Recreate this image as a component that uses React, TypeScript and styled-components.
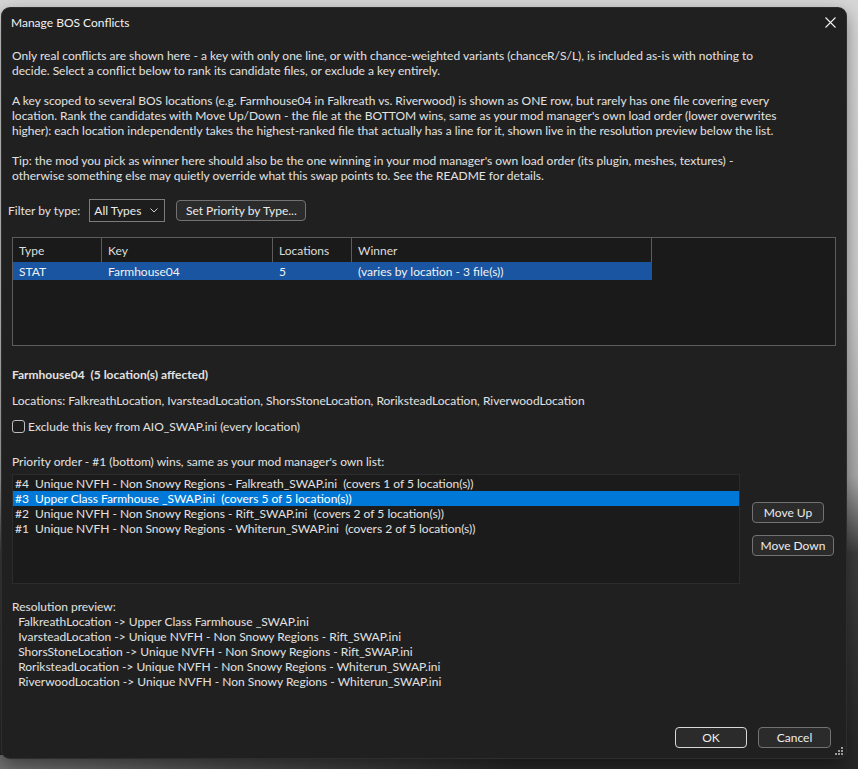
import React from "react";
import styled, { createGlobalStyle } from "styled-components";

const FONT = `"Lato", "Segoe UI", "Liberation Sans", sans-serif`;

const GlobalStyle = createGlobalStyle`
  html, body { margin: 0; padding: 0; }
  body {
    width: 858px;
    height: 769px;
    overflow: hidden;
    font-family: ${FONT};
    background: #1e1e1e;
  }
  * { box-sizing: border-box; }
`;

const Desktop = styled.div`
  width: 858px;
  height: 769px;
  padding: 8px 0 0 2px;
  background:
    linear-gradient(90deg, rgba(120,120,120,0.9) 0%, rgba(90,90,90,0.6) 30%, rgba(30,30,30,0) 60%) bottom / 100% 14px no-repeat,
    linear-gradient(180deg, #d6d6d6 0%, #cbcbcb 40%, #a9a9a9 62%, #3c3c3c 72%, #262626 100%);
`;

const Dialog = styled.div`
  width: 844px;
  height: 750px;
  background: #202020;
  border-radius: 8px;
  box-shadow: 0 0 0 1px #2e2e2e, 0 6px 18px rgba(0, 0, 0, 0.45);
  display: flex;
  flex-direction: column;
  color: #e2e2e2;
  font-size: 12px;
  line-height: 15px;
  position: relative;
`;

const TitleBar = styled.div`
  height: 28px;
  display: flex;
  align-items: center;
  justify-content: space-between;
  padding: 0 10px 0 9px;
`;

const Title = styled.div`
  color: #f2f2f2;
  font-size: 12px;
`;

const CloseButton = styled.div`
  width: 12px;
  height: 12px;
  display: flex;
  align-items: center;
  justify-content: center;
`;

const Content = styled.div`
  flex: 1;
  display: flex;
  flex-direction: column;
  padding: 12px 10px 0 10px;
`;

const Paragraph = styled.p<{ $gap?: number }>`
  margin: ${(p) => p.$gap ?? 0}px 0 0 0;
  white-space: pre-line;
`;

const FilterRow = styled.div`
  display: flex;
  align-items: center;
  height: 23px;
  margin: 16px 0 0 -4px;
`;

const FilterLabel = styled.span`
  margin-right: 9px;
`;

const Combo = styled.div`
  width: 76px;
  height: 23px;
  border: 1px solid #7c7c7c;
  background: #1d1d1d;
  display: flex;
  align-items: center;
  justify-content: space-between;
  padding: 0 6px 0 4px;
  color: #ececec;
`;

const Button = styled.div<{ $w: number; $default?: boolean }>`
  width: ${(p) => p.$w}px;
  height: 21px;
  border: 1px solid ${(p) => (p.$default ? "#d8d8d8" : "#727272")};
  border-radius: 4px;
  background: #2b2b2b;
  color: #ececec;
  display: flex;
  align-items: center;
  justify-content: center;
`;

const SetPriorityButton = styled(Button)`
  margin-left: 11px;
`;

const Table = styled.div`
  margin-top: 15px;
  height: 109px;
  border: 1px solid #5c5c5c;
  background: #1a1a1a;
`;

const Row = styled.div<{ $selected?: boolean; $header?: boolean }>`
  display: grid;
  grid-template-columns: 89px 171px 79px 300px;
  width: 639px;
  height: ${(p) => (p.$header ? 24 : 18)}px;
  background: ${(p) => (p.$selected ? "#1955a1" : "transparent")};
  color: ${(p) => (p.$header ? "#dedede" : "#f2f2f2")};
`;

const Cell = styled.div<{ $sep?: boolean }>`
  display: flex;
  align-items: center;
  padding-left: 6px;
  border-right: ${(p) => (p.$sep ? "1px solid #5c5c5c" : "none")};
  white-space: nowrap;
  overflow: hidden;
`;

const Heading = styled.div`
  margin-top: 21px;
  font-weight: 700;
  white-space: pre;
`;

const Line = styled.div<{ $gap?: number }>`
  margin-top: ${(p) => p.$gap ?? 0}px;
  white-space: pre;
`;

const CheckRow = styled.label`
  margin-top: 11px;
  display: flex;
  align-items: center;
  gap: 3px;
  height: 15px;
`;

const CheckBox = styled.span`
  width: 13px;
  height: 13px;
  border: 1px solid #bdbdbd;
  border-radius: 3px;
  background: #1c1c1c;
`;

const PriorityArea = styled.div`
  margin-top: 5px;
  display: flex;
  align-items: flex-start;
`;

const ListBox = styled.div`
  width: 728px;
  height: 110px;
  border: 1px solid #2c2c2c;
  background: #1b1b1b;
  padding-top: 1px;
`;

const ListItem = styled.div<{ $selected?: boolean }>`
  height: 15px;
  line-height: 15px;
  padding-left: 2px;
  white-space: pre;
  background: ${(p) => (p.$selected ? "#0078d7" : "transparent")};
  color: ${(p) => (p.$selected ? "#ffffff" : "#e2e2e2")};
`;

const SideButtons = styled.div`
  margin: 28px 0 0 12px;
  display: flex;
  flex-direction: column;
  gap: 12px;
`;

const Preview = styled.div`
  margin-top: 15px;
  white-space: pre;
`;

const Footer = styled.div`
  margin-top: auto;
  display: flex;
  justify-content: flex-end;
  gap: 11px;
  padding: 0 15px 10px 0;
`;

const Grip = styled.svg`
  position: absolute;
  right: 3px;
  bottom: 3px;
`;

const candidates = [
  "#4  Unique NVFH - Non Snowy Regions - Falkreath_SWAP.ini  (covers 1 of 5 location(s))",
  "#3  Upper Class Farmhouse _SWAP.ini  (covers 5 of 5 location(s))",
  "#2  Unique NVFH - Non Snowy Regions - Rift_SWAP.ini  (covers 2 of 5 location(s))",
  "#1  Unique NVFH - Non Snowy Regions - Whiterun_SWAP.ini  (covers 2 of 5 location(s))",
];

const preview = [
  "FalkreathLocation -> Upper Class Farmhouse _SWAP.ini",
  "IvarsteadLocation -> Unique NVFH - Non Snowy Regions - Rift_SWAP.ini",
  "ShorsStoneLocation -> Unique NVFH - Non Snowy Regions - Rift_SWAP.ini",
  "RoriksteadLocation -> Unique NVFH - Non Snowy Regions - Whiterun_SWAP.ini",
  "RiverwoodLocation -> Unique NVFH - Non Snowy Regions - Whiterun_SWAP.ini",
];

export default function App() {
  return (
    <Desktop>
      <GlobalStyle />
      <Dialog>
        <TitleBar>
          <Title>Manage BOS Conflicts</Title>
          <CloseButton>
            <svg width="11" height="11" viewBox="0 0 11 11">
              <path d="M0.5 0.5 L10.5 10.5 M10.5 0.5 L0.5 10.5" stroke="#f0f0f0" strokeWidth="1.1" />
            </svg>
          </CloseButton>
        </TitleBar>
        <Content>
          <Paragraph>
            {"Only real conflicts are shown here - a key with only one line, or with chance-weighted variants (chanceR/S/L), is included as-is with nothing to\ndecide. Select a conflict below to rank its candidate files, or exclude a key entirely."}
          </Paragraph>
          <Paragraph $gap={15}>
            {"A key scoped to several BOS locations (e.g. Farmhouse04 in Falkreath vs. Riverwood) is shown as ONE row, but rarely has one file covering every\nlocation. Rank the candidates with Move Up/Down - the file at the BOTTOM wins, same as your mod manager's own load order (lower overwrites\nhigher): each location independently takes the highest-ranked file that actually has a line for it, shown live in the resolution preview below the list."}
          </Paragraph>
          <Paragraph $gap={15}>
            {"Tip: the mod you pick as winner here should also be the one winning in your mod manager's own load order (its plugin, meshes, textures) -\notherwise something else may quietly override what this swap points to. See the README for details."}
          </Paragraph>

          <FilterRow>
            <FilterLabel>Filter by type:</FilterLabel>
            <Combo>
              <span>All Types</span>
              <svg width="8" height="5" viewBox="0 0 8 5">
                <path d="M0.5 0.5 L4 4 L7.5 0.5" stroke="#cfcfcf" strokeWidth="1" fill="none" />
              </svg>
            </Combo>
            <SetPriorityButton $w={130}>Set Priority by Type...</SetPriorityButton>
          </FilterRow>

          <Table>
            <Row $header>
              <Cell $sep>Type</Cell>
              <Cell $sep>Key</Cell>
              <Cell $sep>Locations</Cell>
              <Cell $sep>Winner</Cell>
            </Row>
            <Row $selected>
              <Cell>STAT</Cell>
              <Cell>Farmhouse04</Cell>
              <Cell>5</Cell>
              <Cell>(varies by location - 3 file(s))</Cell>
            </Row>
          </Table>

          <Heading>{"Farmhouse04  (5 location(s) affected)"}</Heading>
          <Line $gap={11}>
            Locations: FalkreathLocation, IvarsteadLocation, ShorsStoneLocation, RoriksteadLocation, RiverwoodLocation
          </Line>
          <CheckRow>
            <CheckBox />
            <span>Exclude this key from AIO_SWAP.ini (every location)</span>
          </CheckRow>
          <Line $gap={20}>Priority order - #1 (bottom) wins, same as your mod manager's own list:</Line>

          <PriorityArea>
            <ListBox>
              {candidates.map((c, i) => (
                <ListItem key={c} $selected={i === 1}>
                  {c}
                </ListItem>
              ))}
            </ListBox>
            <SideButtons>
              <Button $w={72}>Move Up</Button>
              <Button $w={82}>Move Down</Button>
            </SideButtons>
          </PriorityArea>

          <Preview>
            {"Resolution preview:\n" + preview.map((p) => "  " + p).join("\n")}
          </Preview>
        </Content>
        <Footer>
          <Button $w={72} $default>
            OK
          </Button>
          <Button $w={73}>Cancel</Button>
        </Footer>
        <Grip width="8" height="8" viewBox="0 0 8 8">
          <rect x="6" y="0" width="2" height="2" fill="#9a9a9a" />
          <rect x="3" y="3" width="2" height="2" fill="#9a9a9a" />
          <rect x="6" y="3" width="2" height="2" fill="#9a9a9a" />
          <rect x="0" y="6" width="2" height="2" fill="#9a9a9a" />
          <rect x="3" y="6" width="2" height="2" fill="#9a9a9a" />
          <rect x="6" y="6" width="2" height="2" fill="#9a9a9a" />
        </Grip>
      </Dialog>
    </Desktop>
  );
}
